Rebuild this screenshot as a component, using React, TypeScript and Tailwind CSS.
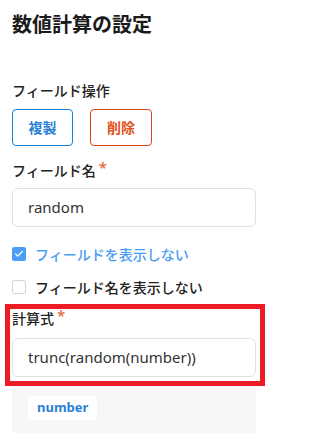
import { Check } from 'lucide-react'

const jp = { fontFamily: '"Noto Sans", "Noto Sans CJK JP", sans-serif' }

function Label({ text, required }: { text: string; required?: boolean }) {
  return (
    <div className="flex items-start text-[14px] leading-[20px] font-medium text-[#222]">
      <span>{text}</span>
      {required && <span className="ml-[3px] -mt-[4px] text-[15px] leading-[20px] text-[#e8663d]">*</span>}
    </div>
  )
}

function TextBox({ value }: { value: string }) {
  return (
    <div className="h-[39px] rounded-[6px] border border-[#e1e1e1] bg-white px-[15px] flex items-center text-[15px] text-[#333]">
      {value}
    </div>
  )
}

export default function App() {
  return (
    <div className="w-[268px] h-[435px] bg-white overflow-hidden px-3" style={jp}>
      <h1 className="pt-[11px] text-[20px] leading-[28px] font-bold text-[#1b1b1b]">数値計算の設定</h1>

      <div className="mt-[42px]">
        <Label text="フィールド操作" />
      </div>
      <div className="mt-[8px] flex gap-[17px]">
        <button className="w-[61px] h-[37px] rounded-[4px] border border-[#1a7fd4] text-[14px] font-bold text-[#2a7fd6]">
          複製
        </button>
        <button className="w-[62px] h-[37px] rounded-[4px] border border-[#d9480f] text-[14px] font-bold text-[#e0521c]">
          削除
        </button>
      </div>

      <div className="mt-[15px]">
        <Label text="フィールド名" required />
      </div>
      <div className="mt-[7px]">
        <TextBox value="random" />
      </div>

      <label className="mt-[17px] flex items-center h-[20px] gap-[9px]">
        <span className="w-[14px] h-[14px] rounded-[2px] bg-[#4a9ff5] flex items-center justify-center">
          <Check className="w-[10px] h-[10px] text-white" strokeWidth={3} />
        </span>
        <span className="text-[14px] font-medium text-[#4a9cf2]">フィールドを表示しない</span>
      </label>
      <label className="mt-[13px] flex items-center h-[20px] gap-[9px]">
        <span className="w-[14px] h-[14px] rounded-[2px] border border-[#d6d6d6] bg-white" />
        <span className="text-[14px] font-medium text-[#222]">フィールド名を表示しない</span>
      </label>

      <div className="mt-[7px] -ml-[7px] -mr-[9px] border-[5px] border-[#ed1c24] pl-[2px] pr-[4px] pb-[4px]">
        <Label text="計算式" required />
        <div className="mt-[9px]">
          <TextBox value="trunc(random(number))" />
        </div>
      </div>

      <div className="h-[47px] bg-[#f7f7f7] px-4 pt-[8px]">
        <span className="inline-flex items-center h-[24px] px-[9px] rounded-[4px] bg-white text-[13px] font-bold text-[#2a7fd6]">
          number
        </span>
      </div>
    </div>
  )
}
